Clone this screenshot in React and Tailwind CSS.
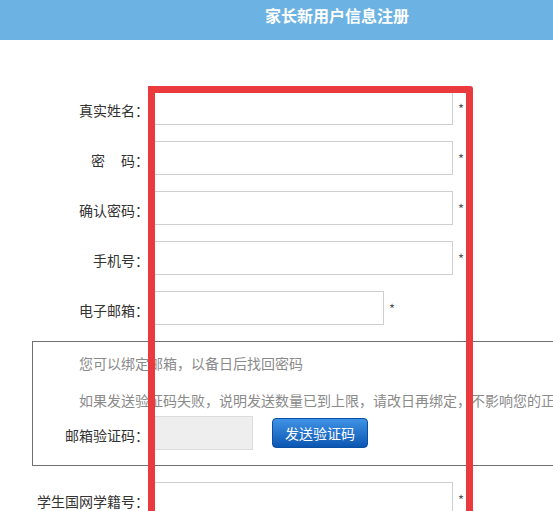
import React from 'react';

const font = { fontFamily: '"Noto Sans CJK SC", "Noto Sans", sans-serif' };

const Row = ({ label, width = 'w-[301px]', star = true, type = 'text' }) => (
  <div className="flex items-center h-[34px] mb-[16px]">
    <label className="w-[149px] text-right text-[14px] leading-[20px] text-[#333] pt-[3px] whitespace-nowrap">
      {label}
    </label>
    <input
      type={type}
      className={`${width} h-[34px] ml-[3px] border border-[#cfcfcf] bg-white outline-none`}
    />
    {star && <span className="ml-[5px] text-[13px] text-[#555] pt-[2px]">*</span>}
  </div>
);

const App = () => {
  return (
    <div className="w-full h-screen overflow-hidden bg-white" style={font}>
      <div className="relative w-[674px]">
        <div className="h-10 bg-[#6cb3e3] flex items-center justify-center">
          <h1 className="text-white font-bold text-[16px] leading-[20px] -mt-[10px]">家长新用户信息注册</h1>
        </div>

        <form className="pt-[51px]">
          <Row label="真实姓名：" />
          <Row
            label={
              <>
                密<span className="inline-block w-[16px]" />码：
              </>
            }
            type="password"
          />
          <Row label="确认密码：" type="password" />
          <Row label="手机号：" />
          <Row label="电子邮箱：" width="w-[232px]" />

          <div className="ml-[32px] w-[610px] border border-[#707070] pt-[11px] pb-[15px] mb-[16px]">
            <p className="pl-[46px] text-[14px] leading-[20px] text-[#8a8a8a] whitespace-nowrap">
              您可以绑定邮箱，以备日后找回密码
            </p>
            <p className="pl-[46px] mt-[17px] text-[14px] leading-[20px] text-[#8a8a8a] whitespace-nowrap">
              如果发送验证码失败，说明发送数量已到上限，请改日再绑定，不影响您的正常使用
            </p>
            <div className="flex items-center h-[34px] mt-[6px]">
              <label className="w-[116px] text-right text-[14px] leading-[20px] text-[#333] pt-[3px] whitespace-nowrap">
                邮箱验证码：
              </label>
              <input
                type="text"
                className="w-[101px] h-[34px] ml-[3px] border border-[#dcdcdc] bg-[#eeeeee] outline-none"
              />
              <button
                type="button"
                className="ml-[19px] w-[96px] h-[30px] rounded-[4px] border border-[#0b4fa3] bg-gradient-to-b from-[#3f93e6] to-[#0a56b2] text-white text-[14px] leading-[20px]"
              >
                发送验证码
              </button>
            </div>
          </div>

          <Row label="学生国网学籍号：" />
        </form>

        <div className="absolute left-[148px] top-[86px] w-[325px] h-[520px] border-[7px] border-[#eb3a3e] rounded-tr-[3px] pointer-events-none" />
      </div>
    </div>
  );
};

export default App;
